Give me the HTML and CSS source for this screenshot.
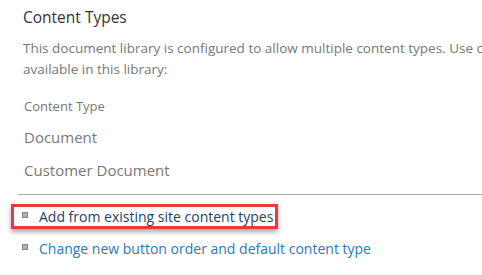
FILE: index.html
```html
<!DOCTYPE html>
<html lang="en">
<head>
  <meta charset="UTF-8">
  <title>Content Types</title>
  <link rel="stylesheet" href="styles.css">
</head>
<body>

  <div class="section">
    <h2 class="section-title">Content Types</h2>

    <p class="intro">
      This document library is configured to allow multiple content types. Use content types to specify the information you want to display<br>
      available in this library:
    </p>

    <div class="ct-table">
      <div class="ct-head">Content Type</div>
      <div class="ct-row">Document</div>
      <div class="ct-row">Customer Document</div>
    </div>

    <ul class="actions">
      <li class="action highlighted"><a href="#">Add from existing site content types</a></li>
      <li class="action"><a href="#" class="blue">Change new button order and default content type</a></li>
    </ul>
  </div>

</body>
</html>
```

FILE: styles.css
```css
body {
  margin: 0;
  font-family: 'Open Sans', 'Noto Sans', sans-serif;
  background-color: #fff;
  overflow: hidden;
}

.section {
  padding: 6px 0 0 23px;
  overflow: hidden;
}

.section-title {
  margin: 0;
  font-size: 15.5px;
  font-weight: normal;
  color: #333;
  line-height: 22px;
}

.intro {
  margin: 10px 0 0;
  font-size: 13.5px;
  line-height: 21px;
  color: #777;
  white-space: nowrap;
}

.ct-table {
  margin-top: 16px;
  margin-left: -5px;
  padding-left: 6px;
  border-bottom: 1px solid #aaa;
  padding-bottom: 12px;
}

.ct-head {
  font-size: 13px;
  color: #777;
  line-height: 20px;
}

.ct-row {
  font-size: 15px;
  color: #777;
  line-height: 23px;
  margin-top: 10px;
}

.actions {
  list-style: none;
  margin: 9px 0 0 -12px;
  padding: 0;
}

.action {
  display: flex;
  align-items: center;
  padding: 1px 0 1px 8px;
  border: 3px solid transparent;
  font-size: 14px;
  line-height: 17px;
  margin-bottom: 7px;
  white-space: nowrap;
}

.action::before {
  content: "";
  width: 4px;
  height: 4px;
  background: #b0b0b0;
  border: 1px solid #888;
  margin-right: 11px;
  margin-top: -3px;
}

.highlighted {
  box-sizing: border-box;
  width: 267px;
  border-color: #e23c41;
  box-shadow: 0 3px 5px rgba(0, 0, 0, 0.35);
}

.action a {
  color: #1f3f66;
  text-decoration: none;
}

.action a.blue {
  color: #2a7ac0;
}
```
